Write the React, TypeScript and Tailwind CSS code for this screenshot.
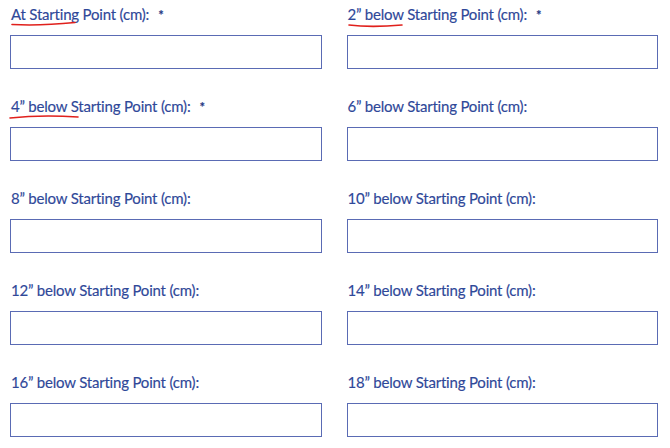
import React from "react";

const fields = [
  { label: "At Starting Point (cm):", req: true },
  { label: "2\u201D below Starting Point (cm):", req: true },
  { label: "4\u201D below Starting Point (cm):", req: true },
  { label: "6\u201D below Starting Point (cm):", req: false },
  { label: "8\u201D below Starting Point (cm):", req: false },
  { label: "10\u201D below Starting Point (cm):", req: false },
  { label: "12\u201D below Starting Point (cm):", req: false },
  { label: "14\u201D below Starting Point (cm):", req: false },
  { label: "16\u201D below Starting Point (cm):", req: false },
  { label: "18\u201D below Starting Point (cm):", req: false },
];

export default function App() {
  return (
    <div
      className="relative w-[670px] h-[448px] bg-white overflow-hidden pl-[10px] pr-[12px] pt-[4px]"
      style={{ fontFamily: "Lato, 'Noto Sans', sans-serif" }}
    >
      <div className="grid grid-cols-2 gap-x-[25px] gap-y-[27px]">
        {fields.map((f, i) => (
          <div key={i} className="flex flex-col">
            <div className="h-[20px] leading-[20px] text-[15px] text-[#2f4899] [-webkit-text-stroke:0.15px_#2f4899] tracking-[-0.2px] pl-[1px] whitespace-nowrap">
              {f.label}
              {f.req && <span className="ml-[9px] font-bold text-[13px] text-[#22357c]">*</span>}
            </div>
            <div className="mt-[11px] h-[34px] border border-[#5a6bb4] bg-white" />
          </div>
        ))}
      </div>
      <svg className="absolute left-0 top-0 pointer-events-none" width="670" height="448">
        <path d="M12 24.5 C 30 25.5, 55 24.5, 75 22.5" stroke="#e0201c" strokeWidth="1.6" fill="none" strokeLinecap="round" />
        <path d="M349 25 C 365 27, 385 26.5, 402 25" stroke="#e0201c" strokeWidth="1.6" fill="none" strokeLinecap="round" />
        <path d="M10 118 C 28 116, 55 115.5, 78 117" stroke="#e0201c" strokeWidth="1.6" fill="none" strokeLinecap="round" />
      </svg>
    </div>
  );
}
